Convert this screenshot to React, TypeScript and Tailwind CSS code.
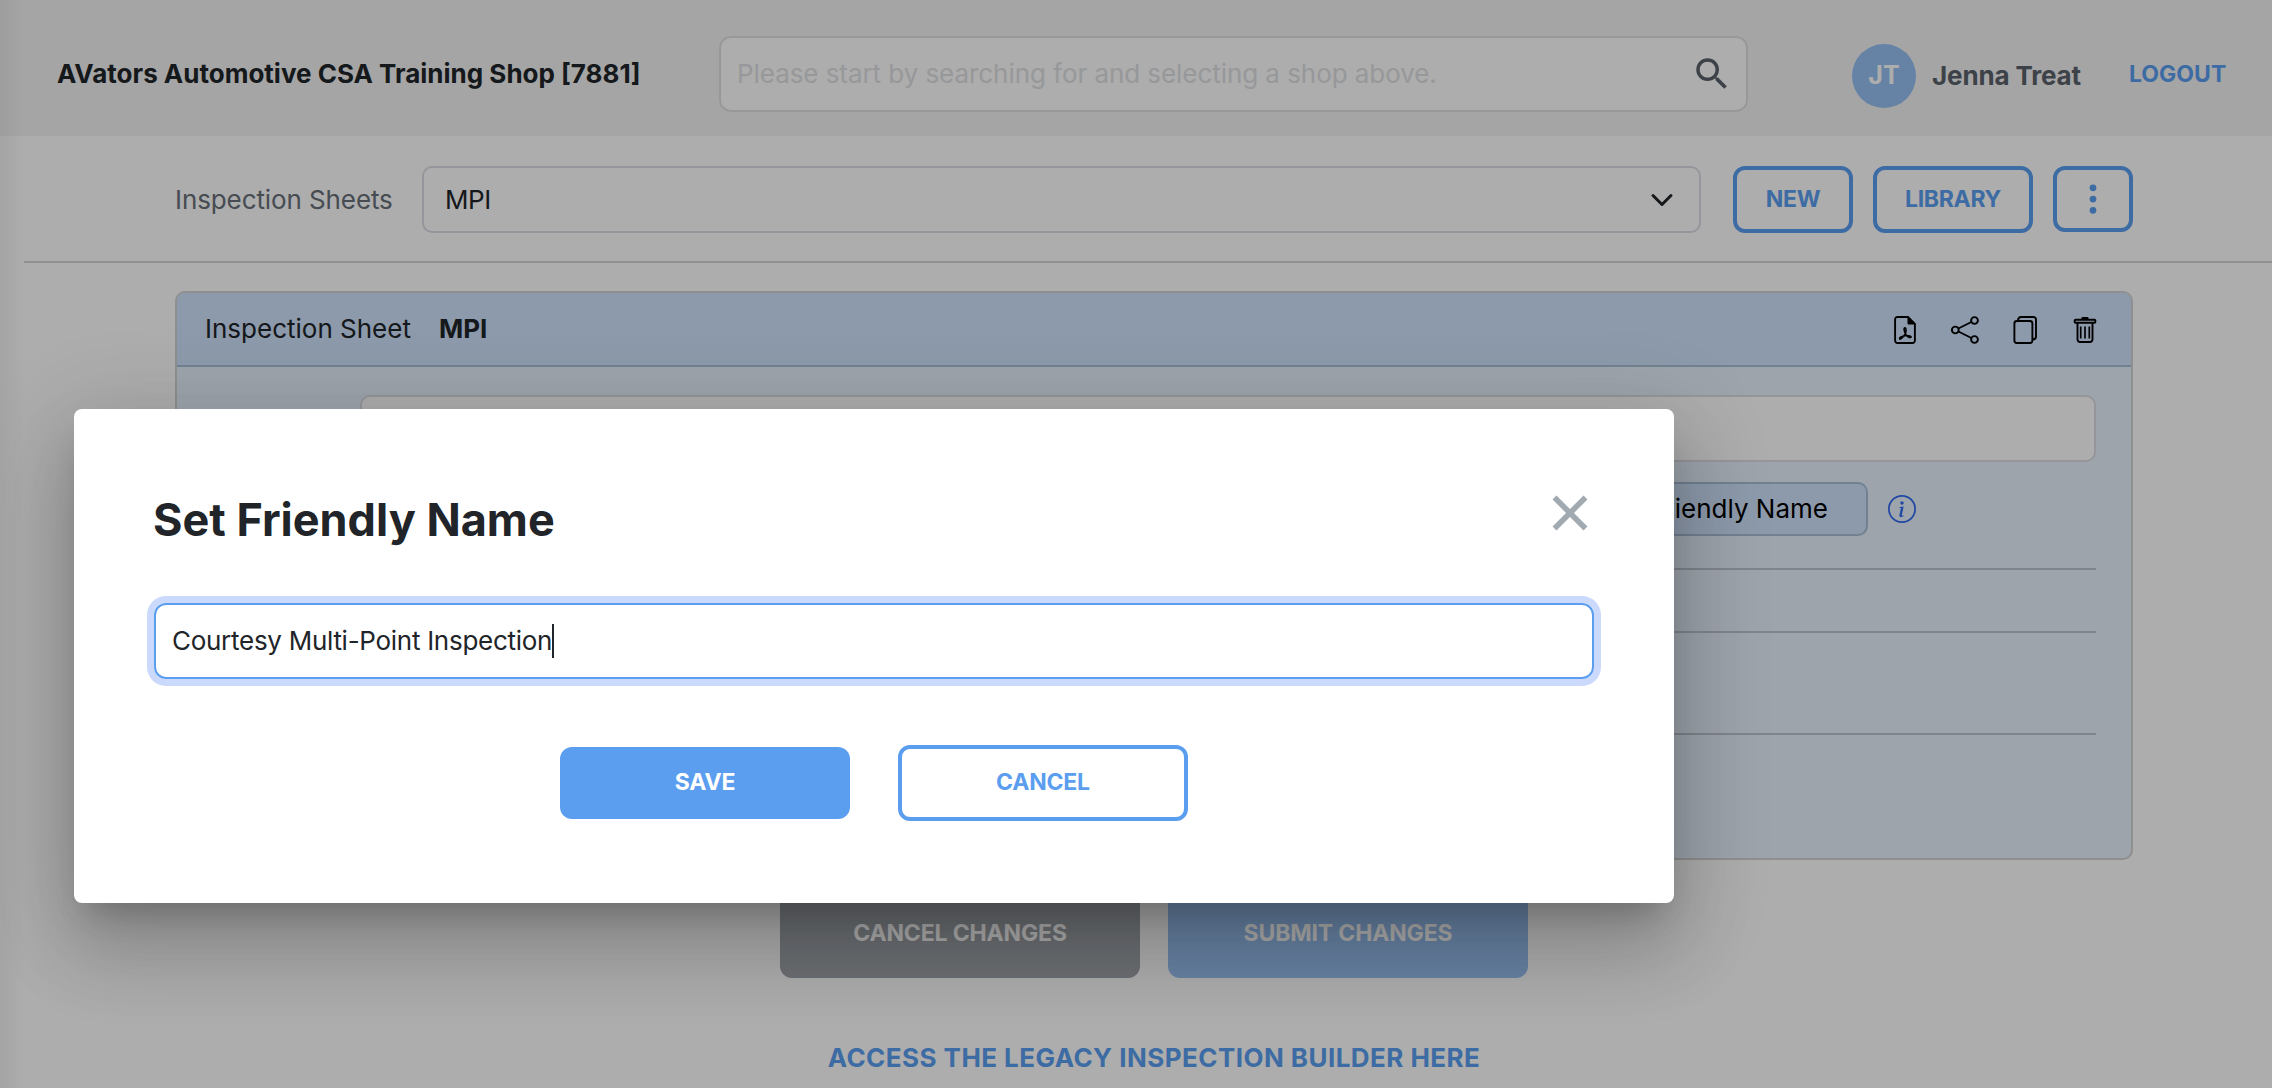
import { useState } from 'react'
import { BsInfoCircle, BsThreeDotsVertical } from 'react-icons/bs'
import { MdSearch } from 'react-icons/md'

function PdfIcon() {
  return (
    <svg className="w-7 h-7" viewBox="0 0 28 28" fill="none" stroke="currentColor" strokeWidth={1.9}>
      <path d="M17 1H6.5A2.4 2.4 0 0 0 4.1 3.4v21.2A2.4 2.4 0 0 0 6.5 27h15a2.4 2.4 0 0 0 2.4-2.4V8Z" strokeLinejoin="round" />
      <path d="M17 1v7h7Z" fill="currentColor" strokeWidth={1} />
      <path
        d="M14.4 17.6c-1.4-2.6-1.8-5.8-.4-5.8s1.2 3.2.4 5.8c1.2 2.6 4.2 4.6 5.4 3.7s-1.7-2.1-5.6-1.6c-3.6.6-6.1 2-5.6 3.100s3.200-1 5.800-5.200Z"
        strokeWidth={1.6}
      />
    </svg>
  )
}

function ShareIcon() {
  return (
    <svg className="w-7 h-7" viewBox="0 0 28 28" fill="none" stroke="currentColor" strokeWidth={1.9}>
      <circle cx="4.3" cy="14" r="3.4" />
      <circle cx="23.5" cy="4.5" r="3.4" />
      <circle cx="23.5" cy="23.5" r="3.4" />
      <path d="m7.4 12.5 13-6.5M7.4 15.5l13 6.5" />
    </svg>
  )
}

function CopyIcon() {
  return (
    <svg className="w-7 h-7" viewBox="0 0 28 28" fill="none" stroke="currentColor" strokeWidth={1.9}>
      <rect x="3.4" y="5" width="18" height="22" rx="2.5" />
      <path d="M7 4.500C7 2.500 8 1 10 1h12.500A2.500 2.500 0 0 1 25 3.500v17c0 1.800-1.200 3-3.500 3" />
    </svg>
  )
}

function TrashIcon() {
  return (
    <svg className="w-7 h-7" viewBox="0 0 28 28" fill="none" stroke="currentColor" strokeWidth={1.9}>
      <rect x="3.6" y="3.7" width="20.800" height="3" rx="1" />
      <path d="M10.5 3V2a1 1 0 0 1 1-1h5a1 1 0 0 1 1 1v1Z" fill="currentColor" stroke="none" />
      <path d="M6.5 7v16.500a2.500 2.500 0 0 0 2.500 2.500h10a2.500 2.500 0 0 0 2.500-2.500V7" />
      <path d="M9.7 10.500v12M14 10.500v12M18.300 10.500v12" strokeWidth={1.7} />
    </svg>
  )
}

function Header() {
  return (
    <header className="flex items-start h-[136px] pt-9 pl-[57px] bg-[#f4f4f4] whitespace-nowrap">
      <h1 className="w-[662px] text-[26px] leading-[76px] font-bold">AVators Automotive CSA Training Shop [7881]</h1>
      <div className="flex items-center justify-between w-[1029px] h-[76px] pl-4 pr-[13px] bg-white border-2 border-[#dfe1e3] rounded-xl">
        <span className="pb-px text-[26px] tracking-[-0.06px] text-[#dee1e4]">
          Please start by searching for and selecting a shop above.
        </span>
        <MdSearch className="w-[42px] h-[42px] text-[#5a626b]" />
      </div>
      <div className="flex items-center gap-4 w-[277px] h-16 mt-2 ml-[104px]">
        <div className="flex items-center justify-center w-16 h-16 rounded-full bg-[#97c1f4] text-[25px] font-bold text-white">
          JT
        </div>
        <span className="pb-px text-[26px] tracking-[-0.15px] font-bold text-[#5a626b]">Jenna Treat</span>
      </div>
      <a className="text-[23px] leading-[76px] font-bold text-[#5b9ef0]">LOGOUT</a>
    </header>
  )
}

function Toolbar() {
  return (
    <div className="flex h-[127px] ml-6 pt-[30px] pl-[151px] border-b-2 border-[#d6d6d6]">
      <label className="w-[247px] text-[26px] leading-[67px] tracking-[-0.1px] text-[#67707a]">Inspection Sheets</label>
      <div className="flex items-center justify-between w-[1279px] h-[67px] pl-[21px] pr-[25px] bg-white border-2 border-[#dcdee6] rounded-[10px] text-[26px] tracking-[-0.4px]">
        MPI
        <svg className="w-6 h-6" viewBox="0 0 16 16" fill="none" stroke="currentColor" strokeWidth={2} strokeLinecap="round" strokeLinejoin="round">
          <path d="m2 5 6 6 6-6" />
        </svg>
      </div>
      <div className="flex gap-5 ml-8 text-[23px] tracking-[-0.3px] font-bold text-[#5b9ef0]">
        <button className="w-[120px] h-[67px] pb-px border-4 border-[#5b9ef0] rounded-xl">NEW</button>
        <button className="w-[160px] h-[67px] pb-px border-4 border-[#5b9ef0] rounded-xl">LIBRARY</button>
        <button className="flex items-center justify-center w-20 h-[66px] border-4 border-[#5b9ef0] rounded-xl">
          <BsThreeDotsVertical className="w-9 h-9" />
        </button>
      </div>
    </div>
  )
}

function SheetPanel() {
  return (
    <section className="w-[1958px] h-[569px] border-2 border-[#d3d3d3] rounded-[10px] bg-[#e7f2fe] overflow-hidden">
      <div className="flex items-center justify-between h-[74px] pl-7 pr-8 bg-[#d0e3fd] border-b-2 border-[#a9bed4]">
        <div className="flex gap-7 pb-0.5 text-[26px]">
          <span>Inspection Sheet</span>
          <span className="font-bold">MPI</span>
        </div>
        <div className="flex gap-8 pt-0.5 text-black">
          <PdfIcon />
          <ShareIcon />
          <CopyIcon />
          <TrashIcon />
        </div>
      </div>
      <div className="pt-7 pl-7 pr-[35px]">
        <div className="h-[67px] ml-[155px] bg-white border-2 border-[#dcdee2] rounded-[10px]" />
        <div className="flex items-center justify-end gap-5 mt-5 pr-[180px]">
          <button className="h-[54px] px-[38px] pb-0.5 bg-[#d0e3fd] border-2 border-[#a9bed4] rounded-[10px] text-[26px] text-black">
            Set Friendly Name
          </button>
          <BsInfoCircle className="w-7 h-7 text-[#316af0]" />
        </div>
        <hr className="mt-8 border-t-2 border-[#bdc5cf]" />
        <hr className="mt-[61px] border-t-2 border-[#bdc5cf]" />
        <hr className="mt-[100px] border-t-2 border-[#bdc5cf]" />
      </div>
    </section>
  )
}

function FriendlyNameDialog() {
  const [name] = useState('Courtesy Multi-Point Inspection')

  return (
    <div className="absolute left-[74px] top-[409px] w-[1600px] h-[494px] px-20 pt-[74px] bg-white rounded-lg shadow-[0_22px_30px_-14px_rgba(0,0,0,0.2),0_48px_76px_6px_rgba(0,0,0,0.14),0_18px_92px_16px_rgba(0,0,0,0.12)]">
      <div className="flex items-start justify-between">
        <h2 className="-ml-px text-[45px] leading-[74px] font-bold">Set Friendly Name</h2>
        <svg className="w-[60px] h-[60px] -mr-1.5 text-[#a1a9b1]" viewBox="0 0 60 60" stroke="currentColor" strokeWidth={5.6}>
          <path d="m14.500 14.500 31 31M45.500 14.500l-31 31" />
        </svg>
      </div>
      <div className="flex items-center h-[76px] mt-[46px] pl-4 pb-px border-2 border-[#5b9ef0] rounded-xl ring-7 ring-[#cbd9fd] text-[26px] tracking-[-0.28px]">
        <span>{name}</span>
        <span className="w-0.5 h-[34px] bg-[#212529]" />
      </div>
      <div className="flex items-center justify-center gap-12 mt-[66px] text-[23px] tracking-[-0.2px] font-bold">
        <button className="w-[290px] h-[72px] pb-0.5 rounded-xl bg-[#5b9ef0] text-white">SAVE</button>
        <button className="w-[290px] h-[76px] pb-0.5 border-4 border-[#5b9ef0] rounded-xl text-[#5b9ef0]">CANCEL</button>
      </div>
    </div>
  )
}

export default function App() {
  return (
    <div className="relative w-full h-screen overflow-hidden bg-white font-['Inter',sans-serif] text-[#212529]">
      <Header />
      <Toolbar />
      <main className="flex flex-col items-center w-[1958px] mt-7 ml-[175px]">
        <SheetPanel />
        <div className="flex gap-7 mt-7 text-[23px] tracking-[-0.15px] font-bold text-white">
          <button className="w-[360px] h-[90px] rounded-xl bg-[#9fa4aa]">CANCEL CHANGES</button>
          <button className="w-[360px] h-[90px] rounded-xl bg-[#98c0f1]">SUBMIT CHANGES</button>
        </div>
        <a className="mt-16 text-[26px] leading-8 tracking-[0.45px] font-bold text-[#5b9ef0]">
          ACCESS THE LEGACY INSPECTION BUILDER HERE
        </a>
      </main>
      <div className="absolute inset-y-0 left-0 w-6 bg-linear-to-r from-black/5 to-transparent" />
      <div className="absolute inset-0 bg-black/32" />
      <FriendlyNameDialog />
    </div>
  )
}
